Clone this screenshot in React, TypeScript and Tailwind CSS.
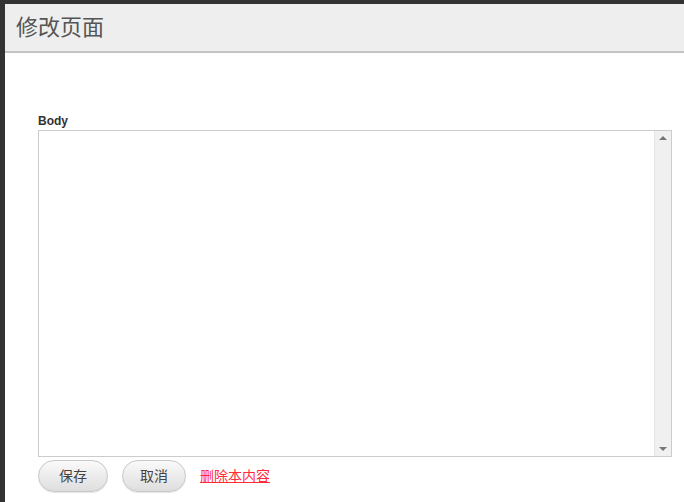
export default function App() {
  return (
    <div className="w-[684px] h-[502px] bg-[#333] pt-[4px] pl-[5px] overflow-hidden" style={{ fontFamily: '"Liberation Sans", "Noto Sans CJK SC", sans-serif' }}>
      <div className="h-full bg-white flex flex-col">
        <div className="h-[49px] bg-[#eeeeee] border-b-2 border-[#c3c3c3] flex items-center pl-[11px]">
          <h1 className="text-[22px] text-[#555] leading-none">修改页面</h1>
        </div>
        <div className="pl-[33px] pr-[12px] pt-[61px]">
          <label className="block text-[12px] font-bold text-[#333] leading-[14px] mb-[2px]">Body</label>
          <div className="h-[327px] border border-[#cccccc] flex">
            <textarea className="flex-1 resize-none outline-none p-1 text-[13px]" />
            <div className="w-[17px] bg-[#f0f0f0] border-l border-[#e6e6e6] flex flex-col justify-between items-center py-[5px]">
              <span className="w-0 h-0 border-l-[4px] border-r-[4px] border-b-[4px] border-l-transparent border-r-transparent border-b-[#777]" />
              <span className="w-0 h-0 border-l-[4px] border-r-[4px] border-t-[4px] border-l-transparent border-r-transparent border-t-[#777]" />
            </div>
          </div>
          <div className="flex items-center mt-[3px]">
            <button className="w-[70px] h-[32px] rounded-full border border-[#c8c8c8] bg-gradient-to-b from-[#fafafa] to-[#dedede] text-[14px] text-[#444] shadow-[0_1px_1px_rgba(0,0,0,0.1)]">保存</button>
            <button className="ml-[14px] w-[64px] h-[32px] rounded-full border border-[#c8c8c8] bg-gradient-to-b from-[#fafafa] to-[#dedede] text-[14px] text-[#444] shadow-[0_1px_1px_rgba(0,0,0,0.1)]">取消</button>
            <a href="#" className="ml-[14px] text-[14px] text-[#ff2a3a] underline">删除本内容</a>
          </div>
        </div>
      </div>
    </div>
  );
}
